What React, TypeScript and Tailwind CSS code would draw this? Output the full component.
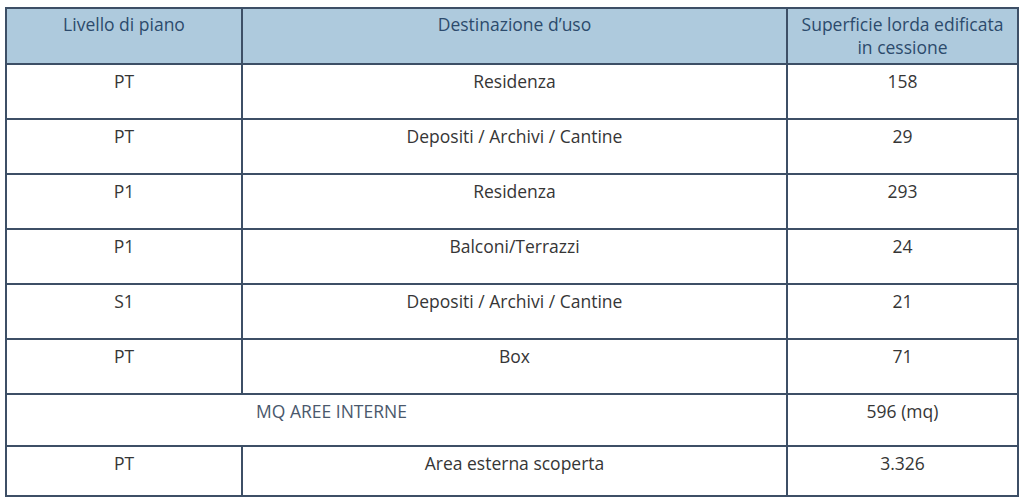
const rows: [string, string, string][] = [
  ["PT", "Residenza", "158"],
  ["PT", "Depositi / Archivi / Cantine", "29"],
  ["P1", "Residenza", "293"],
  ["P1", "Balconi/Terrazzi", "24"],
  ["S1", "Depositi / Archivi / Cantine", "21"],
  ["PT", "Box", "71"],
];

const cell = "border-2 border-[#3d4f66] text-center align-top pt-[5px] leading-[22px]";

export default function App() {
  return (
    <div
      className="w-[1024px] h-[501px] bg-white pl-[5px] pt-[7px]"
      style={{ fontFamily: '"Open Sans", "Liberation Sans", sans-serif' }}
    >
      <table className="border-collapse w-[1012px] table-fixed text-[17.5px] font-medium text-[#363636]">
        <colgroup>
          <col className="w-[236px]" />
          <col className="w-[545px]" />
          <col className="w-[231px]" />
        </colgroup>
        <thead>
          <tr className="h-[56px] bg-[#aecadd] text-[#2c4a6c]">
            <th className="border-2 border-[#3d4f66] font-medium align-top pt-[4px] leading-[23px]">Livello di piano</th>
            <th className="border-2 border-[#3d4f66] font-medium align-top pt-[4px] leading-[23px]">Destinazione d’uso</th>
            <th className="border-2 border-[#3d4f66] font-medium align-top pt-[4px] leading-[23px]">
              Superficie lorda edificata
              <br />
              in cessione
            </th>
          </tr>
        </thead>
        <tbody>
          {rows.map((r, i) => (
            <tr key={i} className="h-[55px]">
              <td className={cell}>{r[0]}</td>
              <td className={cell}>{r[1]}</td>
              <td className={cell}>{r[2]}</td>
            </tr>
          ))}
          <tr className="h-[52px]">
            <td colSpan={2} className={`${cell} pr-[130px] text-[#4a586c]`}>
              MQ AREE INTERNE
            </td>
            <td className={cell}>596 (mq)</td>
          </tr>
          <tr className="h-[50px]">
            <td className={cell}>PT</td>
            <td className={cell}>Area esterna scoperta</td>
            <td className={cell}>3.326</td>
          </tr>
        </tbody>
      </table>
    </div>
  );
}
